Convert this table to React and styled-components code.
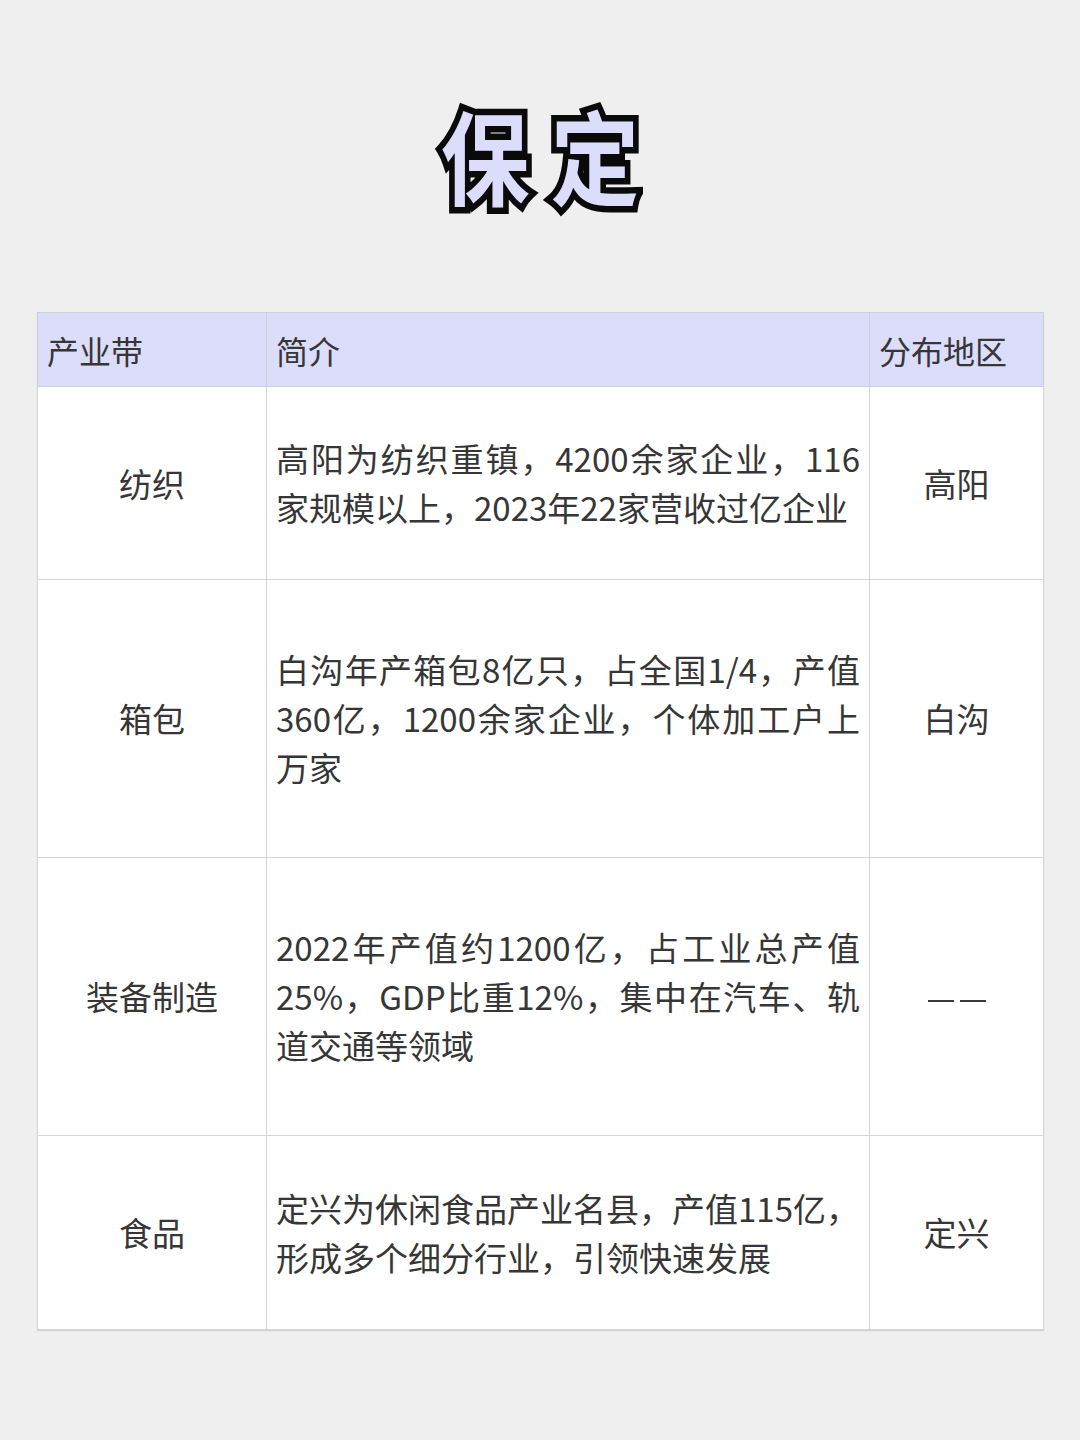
import styled, { createGlobalStyle } from "styled-components";

const GlobalStyle = createGlobalStyle`
  body {
    margin: 0;
    background: #efefef;
    font-family: "Noto Sans CJK SC", "Noto Sans", sans-serif;
  }
`;

const Page = styled.div`
  width: 1080px;
  min-height: 1440px;
  box-sizing: border-box;
  padding: 0 37px;
  background: #efefef;
`;

const Heading = styled.div`
  height: 312px;
  display: flex;
  align-items: center;
  justify-content: center;
`;

const Title = styled.h1`
  display: flex;
  gap: 24px;
  margin: 0 0 4px;
  font-size: 102px;
  font-weight: 700;
  line-height: 1;
  color: #dcdcfb;
  transform: scaleX(0.87);
`;

const TitleChar = styled.span`
  display: block;
  -webkit-text-stroke: 13px #0a0a0a;
  paint-order: stroke fill;
`;

const Table = styled.table`
  width: 1006px;
  border-collapse: collapse;
  table-layout: fixed;
  background: #fff;
  box-shadow: 0 1px 1px rgba(0, 0, 0, 0.12);
  color: #363636;
  font-size: 33px;
`;

const HeadCell = styled.th`
  width: ${(p) => p.$w}px;
  height: 74px;
  padding: 0 9px;
  box-sizing: border-box;
  background: #dcdcfb;
  border: 1px solid #cfcfd6;
  text-align: left;
  font-weight: 400;
  font-size: 32px;
  vertical-align: middle;
`;

const Row = styled.tr`
  height: ${(p) => p.$h}px;
`;

const Cell = styled.td`
  padding: 0 9px;
  border: 1px solid #d6d6d6;
  text-align: ${(p) => (p.$center ? "center" : "left")};
  vertical-align: middle;
  line-height: 49px;
`;

const DashMark = styled.span`
  display: inline-block;
  width: 26px;
  height: 2px;
  margin: 0 3px;
  background: #3a3a3a;
  vertical-align: middle;
`;

const Line = styled.div`
  text-align: justify;
  text-align-last: ${(p) => (p.$full ? "justify" : "left")};
  white-space: nowrap;
`;

const rows = [
  {
    name: "纺织",
    h: 193,
    lines: ["高阳为纺织重镇，4200余家企业，116", "家规模以上，2023年22家营收过亿企业"],
    area: "高阳",
  },
  {
    name: "箱包",
    h: 278,
    lines: ["白沟年产箱包8亿只，占全国1/4，产值", "360亿，1200余家企业，个体加工户上", "万家"],
    area: "白沟",
  },
  {
    name: "装备制造",
    h: 278,
    lines: ["2022年产值约1200亿，占工业总产值", "25%，GDP比重12%，集中在汽车、轨", "道交通等领域"],
    area: null,
  },
  {
    name: "食品",
    h: 194,
    lines: ["定兴为休闲食品产业名县，产值115亿，", "形成多个细分行业，引领快速发展"],
    area: "定兴",
  },
];

const App = () => {
  return (
    <Page>
      <GlobalStyle />
      <Heading>
        <Title>
          <TitleChar>保</TitleChar>
          <TitleChar>定</TitleChar>
        </Title>
      </Heading>
      <Table>
        <thead>
          <tr>
            <HeadCell $w={229}>产业带</HeadCell>
            <HeadCell $w={603}>简介</HeadCell>
            <HeadCell $w={174}>分布地区</HeadCell>
          </tr>
        </thead>
        <tbody>
          {rows.map((r) => (
            <Row key={r.name} $h={r.h}>
              <Cell $center>{r.name}</Cell>
              <Cell>
                {r.lines.map((l, i) => (
                  <Line key={i} $full={i < r.lines.length - 1 && !l.endsWith("，")}>
                    {l}
                  </Line>
                ))}
              </Cell>
              <Cell $center>
                {r.area ?? (
                  <span aria-label="——">
                    <DashMark />
                    <DashMark />
                  </span>
                )}
              </Cell>
            </Row>
          ))}
        </tbody>
      </Table>
    </Page>
  );
};

export default App;
